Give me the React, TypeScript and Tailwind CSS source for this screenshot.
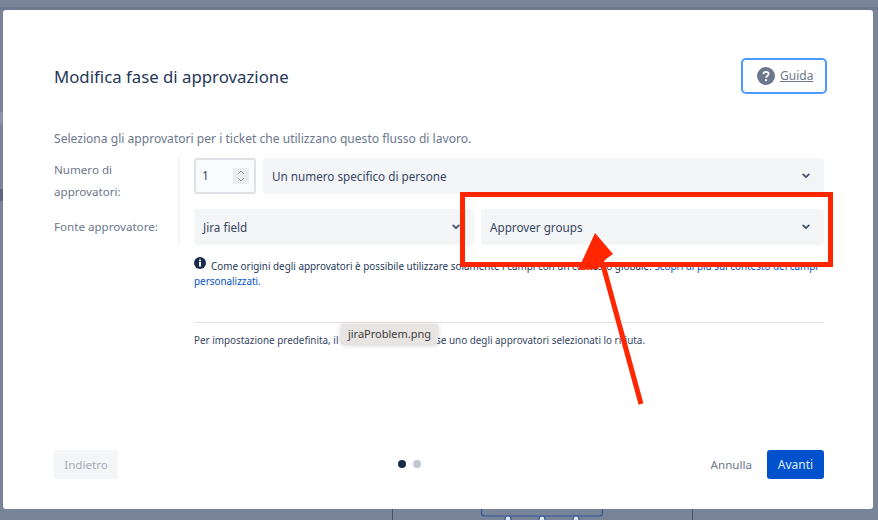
import React from "react";

const Chevron = () => (
  <svg width="8" height="6" viewBox="0 0 10 7" fill="none" stroke="#42526e" strokeWidth="2.2" strokeLinecap="round" strokeLinejoin="round">
    <path d="M1.5 1.5 5 5l3.5-3.5" />
  </svg>
);

const Select = ({ label, className }: { label: string; className: string }) => (
  <div className={`h-9 rounded-[3px] bg-[#f4f5f7] flex items-center justify-between pl-[9px] pr-[14px] text-[11.7px] text-[#344563] ${className}`}>
    <span className="pt-[1px]">{label}</span>
    <Chevron />
  </div>
);

export default function App() {
  return (
    <div className="relative w-[878px] h-[520px] overflow-hidden bg-[#7a8499] pt-[10px] pl-[3px] [font-family:'Noto_Sans',sans-serif]">
      <div className="absolute left-0 top-[7px] w-full h-[3px] bg-[#6e788f]" />
      <div className="absolute left-0 top-[112px] w-[3px] h-[12px] bg-[#8b94a8]" />
      <div className="absolute left-0 top-[189px] w-[3px] h-[12px] bg-[#5d6880]" />
      <div className="absolute left-[392px] top-[509px] w-px h-[11px] bg-[#42526e]" />
      <div className="absolute left-[692px] top-[509px] w-px h-[11px] bg-[#42526e]" />
      <svg className="absolute left-[478px] top-[508px]" width="128" height="12" viewBox="0 0 128 12" fill="none" stroke="#2f5597" strokeWidth="1.2">
        <path d="M3.5 0v5q0 3 3 3h115q3 0 3-3V0" />
        <circle cx="30" cy="11" r="3" fill="#dfe3ea" />
        <circle cx="64" cy="11" r="3" fill="#dfe3ea" />
        <circle cx="98" cy="11" r="3" fill="#dfe3ea" />
      </svg>

      <div className="relative w-[870px] h-[499px] rounded-[3px] bg-white pl-[51px] pr-[49px] flex flex-col">
        <div className="flex items-start justify-between pt-[47px]">
          <h1 className="text-[16.8px] leading-[40px] h-[40px] text-[#253858]">Modifica fase di approvazione</h1>
          <div className="h-[36px] w-[86px] mt-[1px] -mr-[3px] rounded-[5px] border-2 border-[#4c9aff] flex items-center pl-[14px] gap-[5px]">
            <svg width="18" height="18" viewBox="0 0 18 18">
              <circle cx="9" cy="9" r="9" fill="#6b778c" />
              <path d="M6.4 7.1C6.5 5.6 7.6 4.8 9 4.8c1.5 0 2.6.9 2.6 2.2 0 1.9-2.6 1.9-2.6 3.7" fill="none" stroke="#fff" strokeWidth="1.8" />
              <circle cx="9" cy="13.2" r="1.1" fill="#fff" />
            </svg>
            <span className="text-[12px] underline text-[#6b778c]">Guida</span>
          </div>
        </div>

        <p className="mt-[33px] text-[12.08px] leading-[18px] text-[#6b778c]">Seleziona gli approvatori per i ticket che utilizzano questo flusso di lavoro.</p>

        <div className="flex mt-[10px]">
          <div className="w-[126px] h-[87px] border-r-2 border-[#f4f5f7] text-[11.6px] text-[#6b778c]">
            <div className="leading-[22px] pt-[1px]">Numero di<br />approvatori:</div>
            <div className="leading-[22px] mt-[13px]">Fonte approvatore:</div>
          </div>
          <div className="flex-1 pl-[14px] flex flex-col gap-[15px]">
            <div className="flex gap-[7px]">
              <div className="w-[62px] h-9 rounded-[3px] border-2 border-[#dfe1e6] bg-[#fafbfc] flex items-center justify-between pl-[6px] pr-[5px] text-[12px] text-[#344563]">
                <span>1</span>
                <svg width="16" height="16" viewBox="0 0 16 16" fill="none" stroke="#8993a4" strokeWidth="1">
                  <rect width="16" height="16" fill="#ebecf0" stroke="none" />
                  <path d="M5 6l3-3 3 3M5 10l3 3 3-3" />
                </svg>
              </div>
              <Select label="Un numero specifico di persone" className="flex-1" />
            </div>
            <div className="flex gap-[7px]">
              <Select label="Jira field" className="w-[280px]" />
              <Select label="Approver groups" className="flex-1" />
            </div>
            <div className="-mt-[3px] text-[9.9px] leading-[14.5px] text-[#253858]">
              <svg className="inline-block align-[1px] mr-[5px]" width="12" height="12" viewBox="0 0 12 12">
                <circle cx="6" cy="6" r="6" fill="#172b4d" />
                <rect x="5" y="5" width="2" height="4.5" fill="#fff" />
                <rect x="5" y="2.5" width="2" height="1.8" fill="#fff" />
              </svg>
              Come origini degli approvatori è possibile utilizzare solamente i campi con un contesto globale. <span className="text-[#0052cc]">Scopri di più sul contesto dei campi personalizzati.</span>
            </div>
            <div className="mt-[19px] border-t border-[#dfe1e6] pt-[10px] text-[9.9px] leading-[15px] text-[#344563]">
              Per impostazione predefinita, il ticket viene rifiutato se uno degli approvatori selezionati lo rifiuta.
            </div>
          </div>
        </div>

        <div className="mt-auto mb-[30px] h-[29px] flex items-center justify-between relative">
          <div className="w-[64px] h-[29px] rounded-[3px] bg-[#f4f5f7] flex items-center justify-center text-[11.6px] text-[#a5adba]">Indietro</div>
          <div className="flex items-center gap-[7px] -ml-[10px] -mt-[2px]">
            <div className="w-2 h-2 rounded-full bg-[#172b4d]" />
            <div className="w-2 h-2 rounded-full bg-[#c1c7d0]" />
          </div>
          <div className="flex items-center gap-[15px]">
            <span className="text-[11.6px] text-[#6b778c]">Annulla</span>
            <div className="w-[57px] h-[29px] rounded-[3px] bg-[#0052cc] flex items-center justify-center text-[12px] text-[#deebff]">Avanti</div>
          </div>
        </div>
      </div>

      <div className="absolute left-[341px] top-[324px] w-[97px] h-[20px] rounded-[2px] bg-[#e8e4e1] shadow-[0_1px_5px_rgba(0,0,0,0.2)] flex items-center justify-center text-[11px] text-[#3d3d3d]">jiraProblem.png</div>

      <div className="absolute left-[460px] top-[192px] w-[373px] h-[75px] border-[5px] border-[#ff2600]" />
      <svg className="absolute left-[570px] top-[225px]" width="85" height="190" viewBox="0 0 85 190">
        <path d="M71 179 L33 40" stroke="#ff2600" strokeWidth="5" fill="none" />
        <path d="M25 8 L43 29 L36 34 L28 44 L8 45 Z" fill="#ff2600" />
      </svg>
    </div>
  );
}
